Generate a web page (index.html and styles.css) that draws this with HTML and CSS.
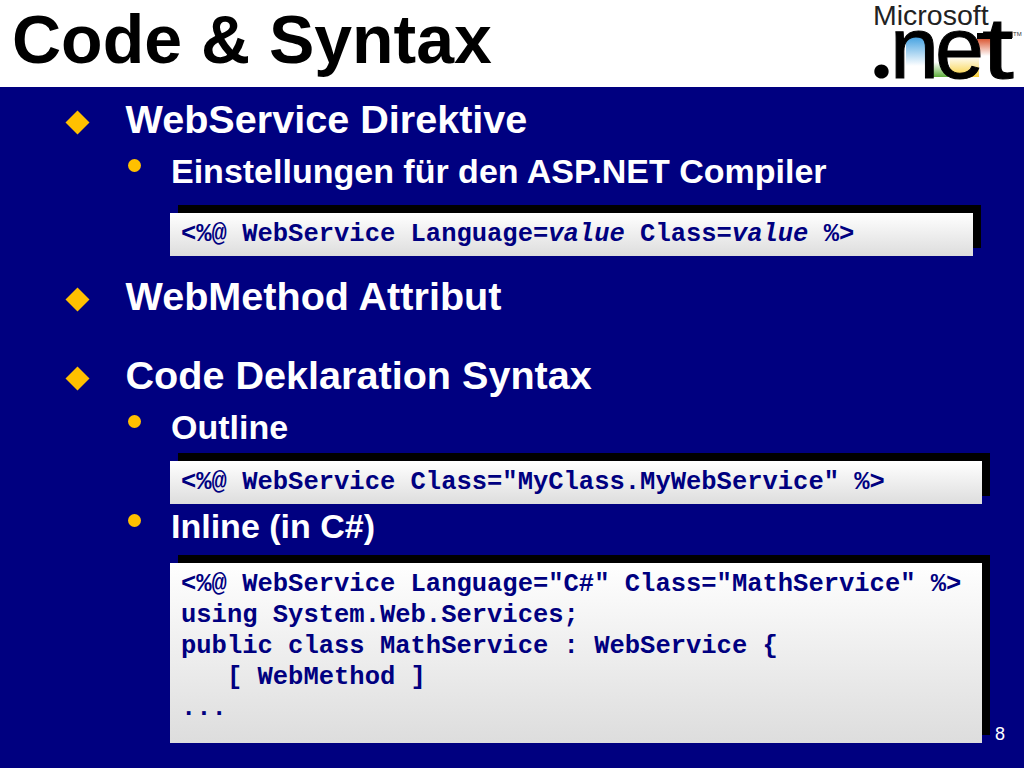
FILE: index.html
```html
<!DOCTYPE html>
<html lang="de">
<head>
<meta charset="utf-8">
<title>Code &amp; Syntax</title>
<link rel="stylesheet" href="styles.css">
</head>
<body>
<div class="slide">
  <header class="head">
    <h1 class="title">Code &amp; Syntax</h1>
    <svg class="logo" viewBox="0 0 160 88" width="160" height="88">
      <defs>
        <linearGradient id="blue" x1="0" y1="0" x2="0" y2="1"><stop offset="0" stop-color="#3f9fe0"/><stop offset="1" stop-color="#fff"/></linearGradient>
        <linearGradient id="green" x1="0" y1="0" x2="0" y2="1"><stop offset="0" stop-color="#fff"/><stop offset="1" stop-color="#5fae3c"/></linearGradient>
        <linearGradient id="yellow" x1="0" y1="0" x2="0" y2="1"><stop offset="0" stop-color="#fff"/><stop offset="1" stop-color="#f8cf3a"/></linearGradient>
        <linearGradient id="red" x1="0" y1="0" x2="0" y2="1"><stop offset="0" stop-color="#d9502a"/><stop offset="1" stop-color="#fff"/></linearGradient>
      </defs>
      <rect x="42" y="36" width="20" height="30" fill="url(#blue)"/>
      <rect x="68" y="62" width="16" height="15" fill="url(#green)"/>
      <rect x="86" y="56" width="29" height="21" fill="url(#yellow)"/>
      <rect x="113" y="38" width="21" height="18" fill="url(#red)"/>
      <rect x="113" y="33" width="35" height="6" fill="#000"/>
      <text class="logo-ms" x="9" y="25">Microsoft</text>
      <text class="logo-net" y="78"><tspan class="logo-dot" x="7">.</tspan><tspan x="26">n</tspan><tspan x="71">e</tspan></text>
      <text class="logo-net" transform="translate(118 78) scale(1.3 1)">t</text>
      <text class="logo-tm" x="149" y="36">TM</text>
    </svg>
  </header>
  <main class="body">
    <section class="item item-first">
      <div class="l1"><span class="diamond"></span><span>WebService Direktive</span></div>
      <div class="l2"><span class="dot"></span><span>Einstellungen für den ASP.NET Compiler</span></div>
      <pre class="code code-short">&lt;%@ WebService Language=<i>value</i> Class=<i>value</i> %&gt;</pre>
    </section>
    <section class="item item-second">
      <div class="l1"><span class="diamond"></span><span>WebMethod Attribut</span></div>
    </section>
    <section class="item item-third">
      <div class="l1"><span class="diamond"></span><span>Code Deklaration Syntax</span></div>
      <div class="l2"><span class="dot"></span><span>Outline</span></div>
      <pre class="code code-mid">&lt;%@ WebService Class="MyClass.MyWebService" %&gt;</pre>
      <div class="l2 l2-tight"><span class="dot"></span><span>Inline (in C#)</span></div>
      <pre class="code code-tall">&lt;%@ WebService Language="C#" Class="MathService" %&gt;
using System.Web.Services;
public class MathService : WebService {
   [ WebMethod ]
...</pre>
    </section>
  </main>
  <div class="page">8</div>
</div>
</body>
</html>
```
FILE: styles.css
```css
html, body { margin: 0; padding: 0; }
body { background: #000080; }
.slide {
  position: relative;
  width: 1024px;
  height: 768px;
  overflow: hidden;
  background: #000080;
  color: #fff;
  font-family: "Liberation Sans", Arial, sans-serif;
  display: flex;
  flex-direction: column;
}
.head {
  height: 87px;
  flex: none;
  background: #fff;
  display: flex;
  justify-content: space-between;
  padding-left: 12px;
}
.title {
  margin: 0;
  font-size: 68px;
  line-height: 78px;
  font-weight: 700;
  color: #000;
}
.logo { display: block; flex: none; }
.logo-ms { font-size: 28.5px; fill: #222; font-family: "Liberation Sans", Arial, sans-serif; }
.logo-net { font-size: 88px; fill: #000; stroke: #000; stroke-width: 1px; font-family: "Liberation Sans", Arial, sans-serif; }
.logo-dot { font-family: Lato, sans-serif; font-weight: 900; stroke-width: 0; }
.logo-tm { font-size: 6px; fill: #333; font-family: "Liberation Sans", Arial, sans-serif; }
.body { padding: 11px 0 0 65px; display: flex; flex-direction: column; }
.l1 {
  display: flex;
  align-items: center;
  font-size: 39.6px;
  line-height: 42px;
  font-weight: 700;
}
.diamond {
  flex: none;
  width: 17px;
  height: 17px;
  margin: 6px 40px 0 3.5px;
  background: #ffc000;
  transform: rotate(45deg);
}
.l2 {
  display: flex;
  align-items: center;
  margin-top: 13px;
  padding-left: 63px;
  font-size: 34px;
  line-height: 37px;
  font-weight: 700;
}
.l2-tight { margin-top: 4px; }
.dot {
  flex: none;
  width: 13px;
  height: 13px;
  margin: -13px 30px 0 0;
  border-radius: 50%;
  background: #ffc000;
}
.code {
  width: 812px;
  box-sizing: border-box;
  height: 43px;
  margin: 23px 0 0 105px;
  padding: 6px 0 0 11px;
  font-family: "Liberation Mono", "Courier New", monospace;
  font-size: 25.5px;
  line-height: 31px;
  font-weight: 700;
  color: #000080;
  background: linear-gradient(#fff, #ddd);
  box-shadow: 8px -8px 0 #000;
}
.code-short { width: 803px; }
.code-mid { margin-top: 15px; }
.code-tall { height: 180px; margin-top: 18px; }
.item-second { margin-top: 19px; }
.item-third { margin-top: 37px; }
.page {
  position: absolute;
  right: 19px;
  bottom: 24px;
  font-size: 18px;
  line-height: 20px;
}
```
